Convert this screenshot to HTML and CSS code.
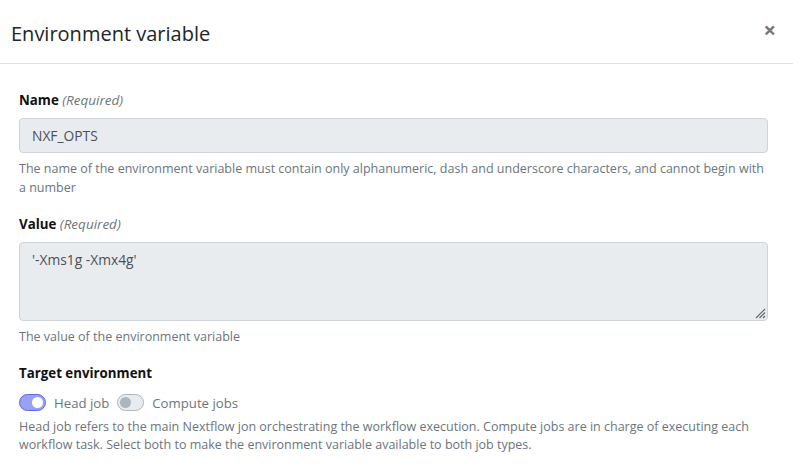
FILE: index.html
```html
<!DOCTYPE html>
<html>
<head>
<meta charset="utf-8">
<link rel="stylesheet" href="styles.css">
</head>
<body>
<div class="modal">
  <div class="modal-header">
    <h5 class="modal-title">Environment variable</h5>
    <span class="close">&times;</span>
  </div>
  <div class="modal-body">
    <div class="group">
      <div class="label"><b>Name</b> <i>(Required)</i></div>
      <div class="input">NXF_OPTS</div>
      <div class="help">The name of the environment variable must contain only alphanumeric, dash and underscore characters, and cannot begin with a number</div>
    </div>
    <div class="group">
      <div class="label"><b>Value</b> <i>(Required)</i></div>
      <div class="input textarea">'-Xms1g -Xmx4g'
        <svg class="grip" width="12" height="12" viewBox="0 0 12 12"><path d="M11 2 L2 11 M11 5.5 L5.5 11 M11 9 L9 11" stroke="#666" stroke-width="1.2" fill="none"/></svg>
      </div>
      <div class="help">The value of the environment variable</div>
    </div>
    <div class="group">
      <div class="label"><b>Target environment</b></div>
      <div class="switches">
        <span class="switch on"></span><span class="switch-label">Head job</span>
        <span class="switch"></span><span class="switch-label">Compute jobs</span>
      </div>
      <div class="help">Head job refers to the main Nextflow jon orchestrating the workflow execution. Compute jobs are in charge of executing each workflow task. Select both to make the environment variable available to both job types.</div>
    </div>
  </div>
</div>
</body>
</html>
```
FILE: styles.css
```css
html, body {
  margin: 0;
  padding: 0;
  background: #fff;
}
body {
  font-family: "Open Sans", "Noto Sans", sans-serif;
  font-size: 13px;
  color: #212529;
  width: 793px;
  height: 467px;
  overflow: hidden;
}
.modal-header {
  height: 64px;
  border-bottom: 1px solid #dee2e6;
  display: flex;
  align-items: center;
  justify-content: space-between;
  padding: 0 17px 0 11px;
  box-sizing: border-box;
  position: relative;
}
.modal-title {
  margin: 0;
  font-size: 20px;
  font-weight: 400;
  color: #212529;
  padding-top: 3px;
}
.close {
  font-size: 22px;
  font-weight: 700;
  color: #777;
  line-height: 1;
  margin-top: -5px;
}
.modal-body {
  padding: 27px 25px 0 19px;
}
.group {
  margin-bottom: 18px;
}
.group:nth-child(2) { margin-bottom: 17px; }
.label {
  font-size: 13.3px;
  margin-bottom: 9px;
  line-height: 18px;
}
.label b { font-weight: 700; color: #111; }
.label i { color: #6c757d; font-size: 13.5px; }
.input {
  height: 35px;
  box-sizing: border-box;
  background: #e9ecef;
  border: 1px solid #ced4da;
  border-radius: 4px;
  padding: 7px 12px;
  color: #495057;
  font-size: 13.8px;
  line-height: 19px;
  position: relative;
}
.textarea {
  height: 79px;
}
.grip {
  position: absolute;
  right: 1px;
  bottom: 1px;
}
.help {
  color: #6c757d;
  font-size: 12.5px;
  line-height: 18.5px;
  margin-top: 7px;
}
.switches {
  display: flex;
  align-items: center;
  height: 20px;
  margin-top: 11px;
}
.switch {
  width: 27px;
  height: 17px;
  box-sizing: border-box;
  border-radius: 9px;
  border: 1px solid #adb5bd;
  background: #e9ecef;
  position: relative;
  margin-right: 8px;
}
.switch::after {
  content: "";
  position: absolute;
  left: 2px;
  top: 2px;
  width: 11px;
  height: 11px;
  border-radius: 50%;
  background: #adb5bd;
}
.switch.on {
  background: #9aa1f2;
  border-color: #5c68e6;
}
.switch.on::after {
  left: 12px;
  background: #fff;
}
.switch-label {
  color: #6c757d;
  margin-right: 8px;
  font-size: 13.2px;
}
.switches + .help { margin-top: 5px; }
```
